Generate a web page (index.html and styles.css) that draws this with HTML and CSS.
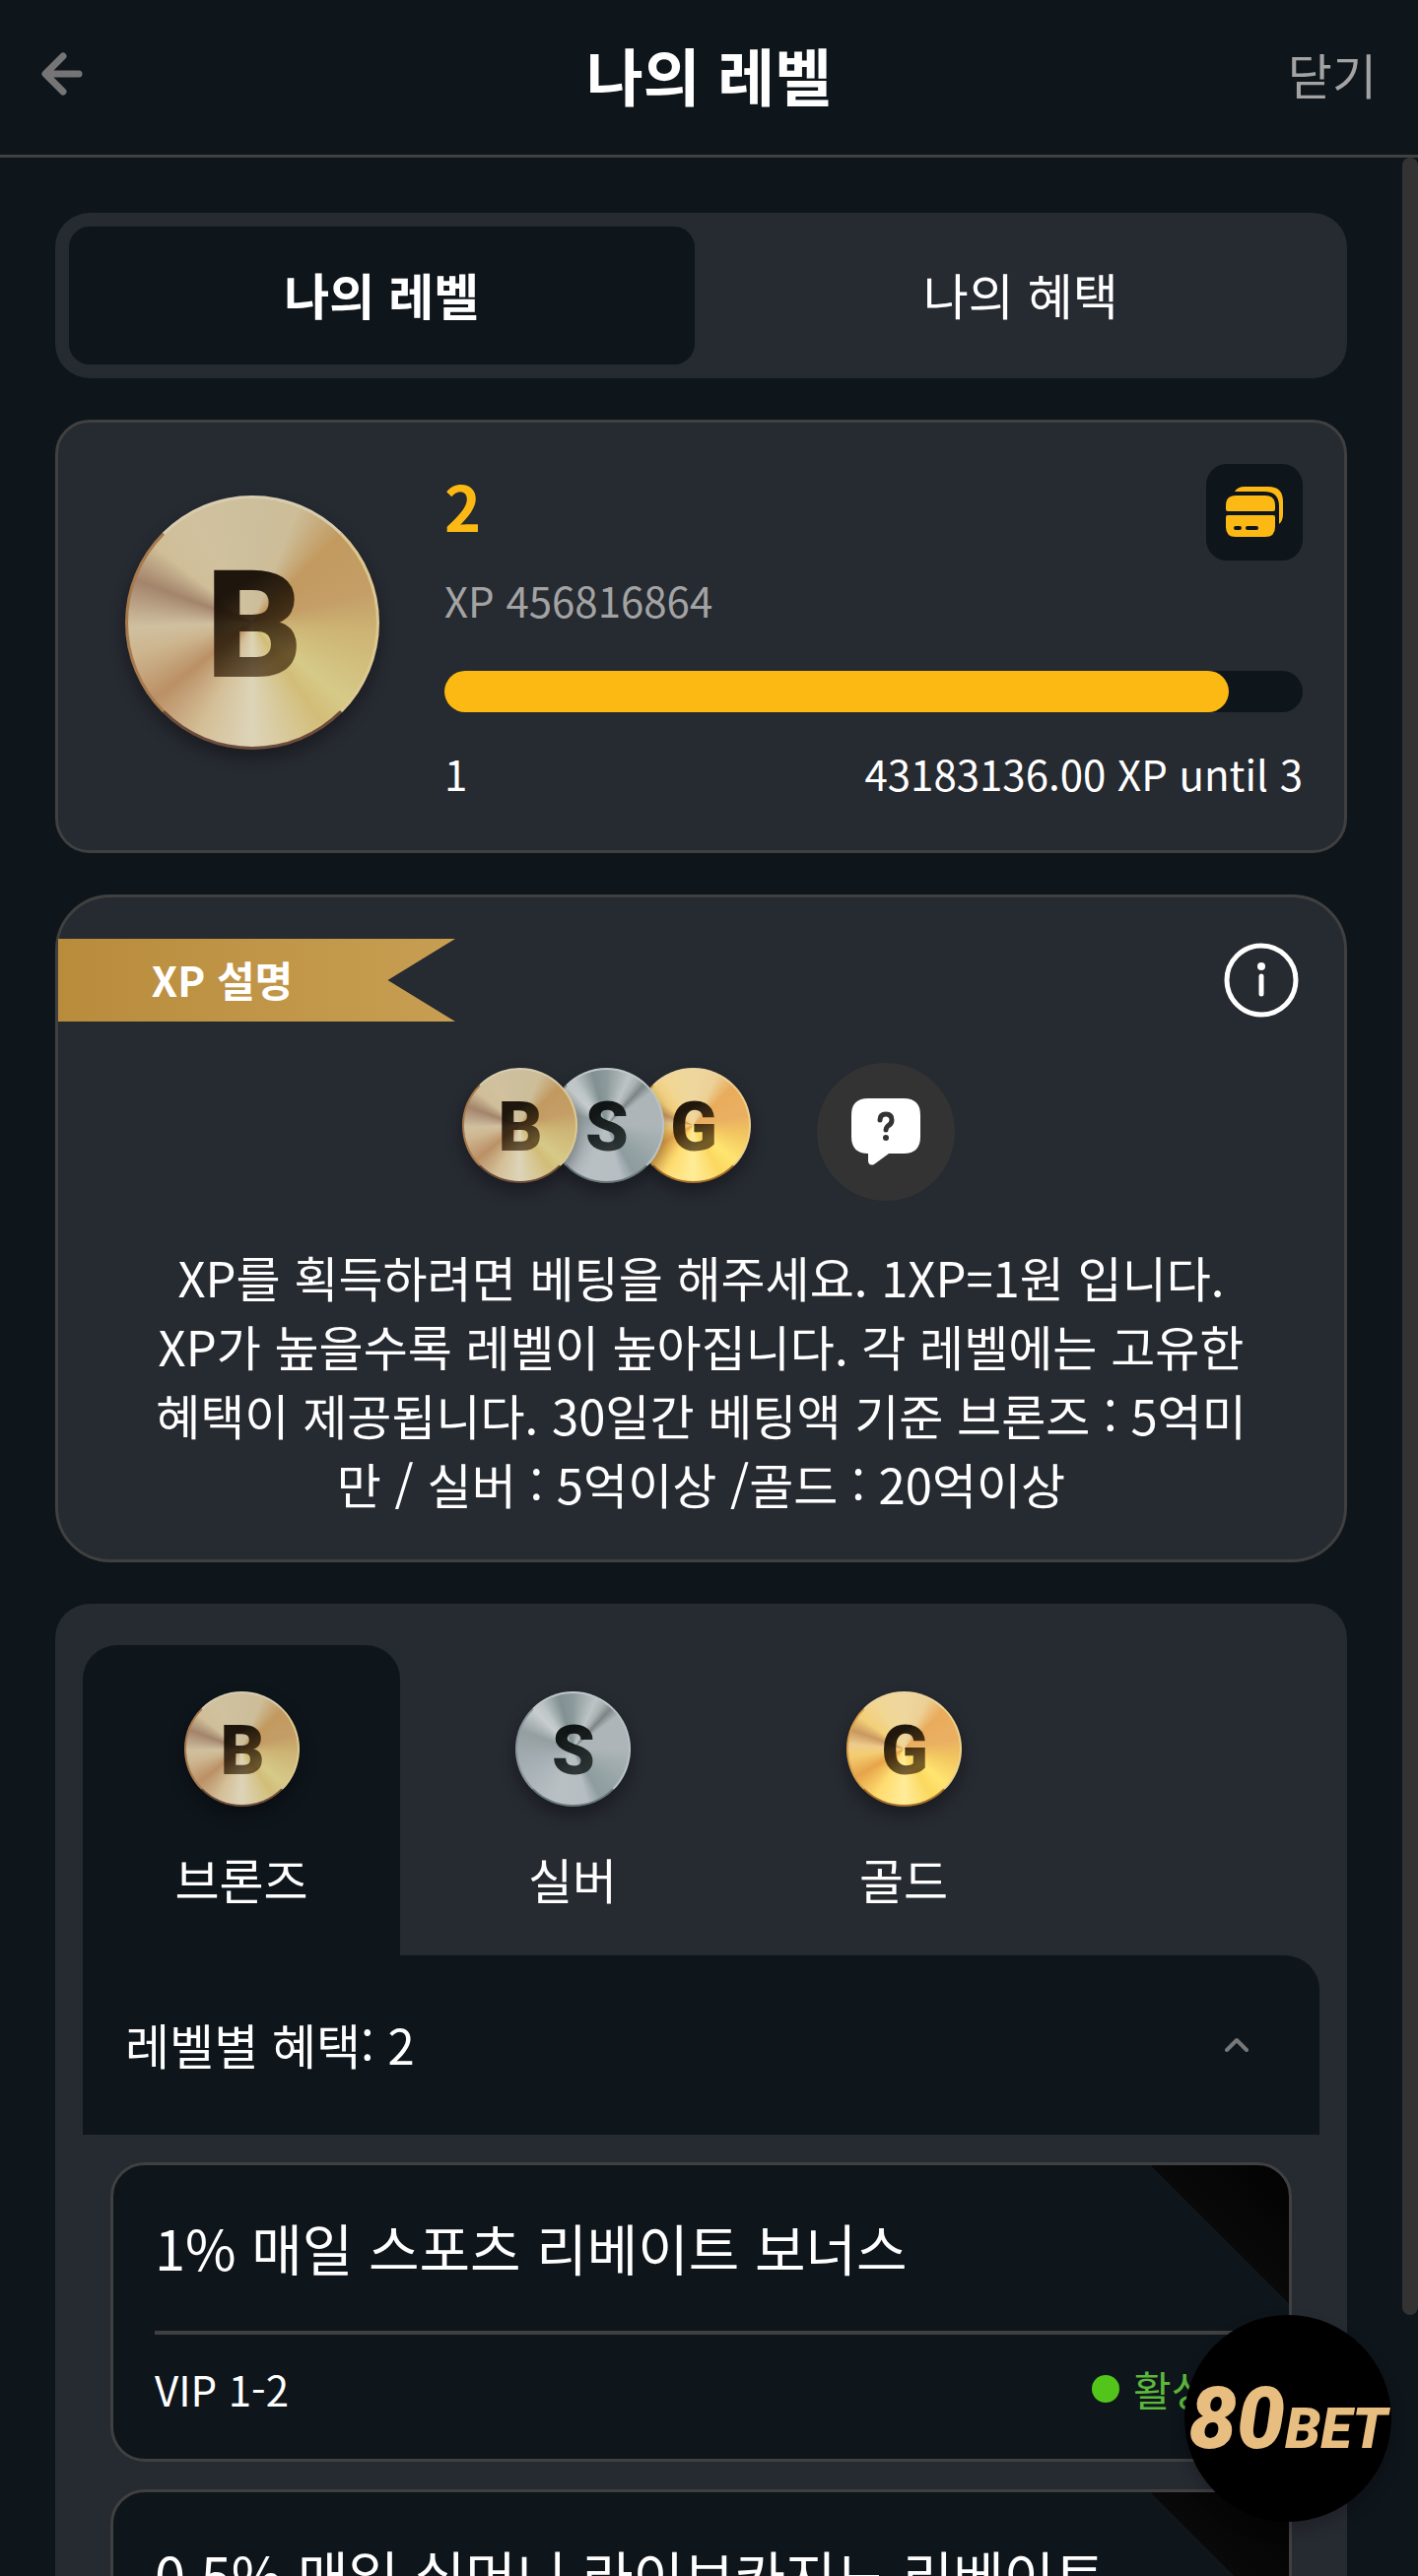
FILE: index.html
```html
<!DOCTYPE html>
<html lang="ko">
<head>
<meta charset="utf-8">
<meta name="viewport" content="width=device-width, initial-scale=1">
<title>나의 레벨</title>
<link rel="stylesheet" href="styles.css">
</head>
<body>
<div class="app">
  <header class="topbar">
    <button class="topbar-back" type="button" aria-label="뒤로">
      <svg width="42" height="44" viewBox="0 0 42 44" fill="none" stroke="currentColor" stroke-width="7" stroke-linecap="round" stroke-linejoin="round"><path d="M22 4 4 22l18 18M5 22h33"/></svg>
    </button>
    <h1 class="topbar-title">나의 레벨</h1>
    <button class="topbar-close" type="button">닫기</button>
  </header>

  <div class="body">
    <main class="content">
      <nav class="switch">
        <button class="switch-tab switch-tab-active" type="button">나의 레벨</button>
        <button class="switch-tab" type="button">나의 혜택</button>
      </nav>

      <section class="level-card">
        <div class="coin coin-large coin-bronze"><span class="coin-letter">B</span></div>
        <div class="level-info">
          <div class="level-head">
            <div>
              <div class="level-number">2</div>
              <div class="level-xp">XP 456816864</div>
            </div>
            <button class="card-button" type="button" aria-label="카드">
              <svg width="60" height="54" viewBox="0 0 60 54">
                <path fill="currentColor" d="M10 6Q13 1 20 1h24q15 0 15 15v13q0 7-4 10V21Q55 6 40 6H10z"/>
                <path fill="currentColor" d="M11 10h30q10 0 10 10v4q0 2-2 2H3q-2 0-2-2v-4q0-10 10-10z"/>
                <path fill="currentColor" fill-rule="evenodd" d="M3 30h46q2 0 2 2v10q0 10-10 10H11Q1 52 1 42V32q0-2 2-2zm8 11a2 2 0 0 0 0 4h4a2 2 0 0 0 0-4zm12 0a2 2 0 0 0 0 4h9a2 2 0 0 0 0-4z"/>
              </svg>
            </button>
          </div>
          <div class="progress"><div class="progress-fill" style="width:91.36%"></div></div>
          <div class="level-foot"><span>1</span><span>43183136.00 XP until 3</span></div>
        </div>
      </section>

      <section class="xp-card">
        <div class="xp-head">
          <h2 class="ribbon">XP 설명</h2>
          <button class="info-button" type="button" aria-label="정보">
            <svg width="76" height="76" viewBox="0 0 76 76" fill="none" stroke="currentColor" stroke-linecap="round"><circle cx="38" cy="38" r="35" stroke-width="5"/><path stroke-width="5" d="M38 34v18"/><circle cx="38" cy="24" r="4" fill="currentColor" stroke="none"/></svg>
          </button>
        </div>
        <div class="xp-icons">
          <div class="coin-stack">
            <div class="coin coin-bronze"><span class="coin-letter">B</span></div>
            <div class="coin coin-silver"><span class="coin-letter">S</span></div>
            <div class="coin coin-gold"><span class="coin-letter">G</span></div>
          </div>
          <button class="help-button" type="button" aria-label="도움말">
            <svg width="70" height="68" viewBox="0 0 70 68">
              <path fill="#fff" d="M17 0h36q17 0 17 17v22q0 17-17 17H38L23 67q-5 2-6-3v-8Q0 56 0 39V17Q0 0 17 0z"/>
              <path fill="none" stroke="#333" stroke-width="5" stroke-linecap="round" d="M29 22q0-6 6-6t6 6q0 4-4 6-2 2-2 4"/>
              <circle cx="35" cy="40" r="3" fill="#333"/>
            </svg>
          </button>
        </div>
        <p class="xp-text">XP를 획득하려면 베팅을 해주세요. 1XP=1원 입니다. XP가 높을수록 레벨이 높아집니다. 각 레벨에는 고유한 혜택이 제공됩니다. 30일간 베팅액 기준 브론즈 : 5억미만 / 실버 : 5억이상 /골드 : 20억이상</p>
      </section>

      <section class="tiers">
        <nav class="tier-tabs">
          <button class="tier-tab tier-tab-active" type="button"><span class="coin coin-bronze"><span class="coin-letter">B</span></span><span class="tier-name">브론즈</span></button>
          <button class="tier-tab" type="button"><span class="coin coin-silver"><span class="coin-letter">S</span></span><span class="tier-name">실버</span></button>
          <button class="tier-tab" type="button"><span class="coin coin-gold"><span class="coin-letter">G</span></span><span class="tier-name">골드</span></button>
        </nav>
        <button class="tier-header" type="button">
          <span class="tier-summary">레벨별 혜택: 2</span>
          <svg width="24" height="16" viewBox="0 0 24 16" fill="none" stroke="#777" stroke-width="4" stroke-linecap="round" stroke-linejoin="round"><path d="m2 13 10-10 10 10"/></svg>
        </button>
        <div class="benefits">
          <article class="benefit">
            <h3 class="benefit-title">1% 매일 스포츠 리베이트 보너스</h3>
            <div class="benefit-foot"><span>VIP 1-2</span><span class="status">활성화</span></div>
          </article>
          <article class="benefit">
            <h3 class="benefit-title">0.5% 매일 실머니 라이브카지노 리베이트</h3>
            <div class="benefit-foot"><span>VIP 1-2</span><span class="status">활성화</span></div>
          </article>
        </div>
      </section>
    </main>
    <div class="scrollbar"><div class="scrollbar-thumb"></div></div>
  </div>

  <a class="brand" href="#"><span class="brand-number">80</span><span class="brand-word">BET</span></a>
</div>
</body>
</html>
```
FILE: styles.css
```css
:root {
  --bg: #0e151b;
  --card: #262a31;
  --line: #404040;
  --gold: #fdb913;
}

* { box-sizing: border-box; }

body {
  margin: 0;
  background: var(--bg);
  color: #fff;
  font-family: "Noto Sans CJK KR", sans-serif;
  font-size: 49px;
  line-height: 70px;
}

button {
  margin: 0;
  padding: 0;
  border: 0;
  background: none;
  color: inherit;
  font: inherit;
  cursor: pointer;
}

svg { display: block; }

h1, h2, h3, p { margin: 0; font-weight: 400; }

.app {
  display: flex;
  flex-direction: column;
  height: 100vh;
  overflow: hidden;
}

/* Top bar */
.topbar {
  flex: none;
  display: grid;
  grid-template-columns: 1fr auto 1fr;
  align-items: center;
  height: 160px;
  padding: 0 42px 8px;
  border-bottom: 3px solid var(--line);
}
.topbar-back { justify-self: start; color: #757575; }
.topbar-title { font-size: 63px; font-weight: 700; }
.topbar-close { justify-self: end; color: #a3a3a3; }

.body { flex: 1; display: flex; min-height: 0; }

.content {
  flex: 1;
  display: flex;
  flex-direction: column;
  gap: 42px;
  min-width: 0;
  padding: 56px;
  overflow-y: auto;
  scrollbar-width: none;
}
.content > * { flex: none; }

.scrollbar { flex: none; width: 16px; }
.scrollbar-thumb { height: 2190px; max-height: 100%; border-radius: 8px; background: #333; }

/* View switch */
.switch {
  display: grid;
  grid-template-columns: 1fr 1fr;
  gap: 14px;
  padding: 14px;
  border-radius: 35px;
  background: var(--card);
}
.switch-tab { height: 140px; padding-bottom: 4px; border-radius: 21px; font-size: 50px; }
.switch-tab-active { background: var(--bg); font-weight: 700; }

/* Coins */
.coin {
  flex: none;
  display: flex;
  align-items: center;
  justify-content: center;
  width: 117px;
  height: 117px;
  border: 2px solid;
  border-radius: 50%;
  box-shadow: 0 8px 16px rgba(0, 0, 0, .35);
  background-origin: border-box;
}
.coin-letter {
  padding: 2px 0 0 2px;
  font: 900 70px/1 Roboto, sans-serif;
  background: linear-gradient(150deg, rgba(20, 12, 4, .95) 30%, rgba(60, 36, 8, .7) 75%);
  -webkit-background-clip: text;
  background-clip: text;
  color: transparent;
}
.coin-large { width: 258px; height: 258px; border-width: 3px; }
.coin-large .coin-letter { padding: 6px 0 0 4px; font-size: 152px; }
.coin-silver .coin-letter {
  background-image: linear-gradient(150deg, rgba(8, 12, 12, .95) 30%, rgba(24, 30, 30, .85) 75%);
}
.coin-bronze {
  border-color: #d8cdb0 #dcc890 #6e4c3c #a87a4c;
  background-image: conic-gradient(#cdbf9c 0deg, #cdbd98 22deg, #c29a60 45deg, #c49e66 75deg, #cdb474 95deg, #d6ca88 130deg, #d2bd78 145deg, #ddd4b8 180deg, #d4c098 205deg, #bb9066 232deg, #cdb58e 255deg, #d0c0a0 268deg, #a3846c 290deg, #cfbe98 308deg, #d1c19e 330deg, #cdbf9c 360deg);
}
.coin-silver {
  border-color: #c0c8ca #b8c2c6 #68777c #8a9599;
  background-image: conic-gradient(#8c9a9c 0deg, #bec4c5 25deg, #aab1b2 34deg, #7c8687 43deg, #adb5b8 53deg, #adb5b8 90deg, #93a1a3 135deg, #8e9c9f 150deg, #b6bec2 165deg, #b8c0c4 200deg, #a2acb0 260deg, #949fa1 290deg, #c8cecf 315deg, #bcc4c5 325deg, #819092 345deg, #8c9a9c 360deg);
}
.coin-gold {
  border-color: #eed6a0 #eed08a #a8702c #dca048;
  background-image: conic-gradient(#eed79e 0deg, #ecd096 25deg, #e9ac5c 45deg, #eab062 80deg, #f2c560 100deg, #ffe570 130deg, #fbd860 150deg, #ffec98 180deg, #ffdc70 210deg, #e6a44a 240deg, #f4cc70 262deg, #eecb8c 275deg, #c99860 290deg, #f2cf78 306deg, #f1d694 330deg, #eed79e 360deg);
}

/* Level summary */
.level-card {
  display: flex;
  align-items: flex-start;
  gap: 66px;
  padding: 42px 42px 42px 68px;
  border: 3px solid var(--line);
  border-radius: 35px;
  background: var(--card);
}
.level-card > .coin { margin-top: 32px; }
.level-info { flex: 1; font-size: 42px; line-height: 60px; }
.level-head { display: flex; justify-content: space-between; align-items: flex-start; }
.level-number { color: var(--gold); font-size: 63px; line-height: 84px; font-weight: 700; }
.level-xp { padding-top: 24px; color: #a3a3a3; }
.card-button {
  display: grid;
  place-items: center;
  width: 98px;
  height: 98px;
  border-radius: 21px;
  background: var(--bg);
  color: var(--gold);
}
.progress { height: 42px; margin: 42px 0 32px; border-radius: 21px; background: var(--bg); }
.progress-fill { height: 100%; border-radius: 21px; background: var(--gold); }
.level-foot { display: flex; justify-content: space-between; padding-bottom: 6px; }

/* XP explanation */
.xp-card {
  padding: 42px 0 42px;
  border: 3px solid var(--line);
  border-radius: 56px;
  background: var(--card);
}
.xp-head { display: flex; justify-content: space-between; align-items: center; padding-right: 46px; }
.ribbon {
  width: 403px;
  padding: 0 70px 2px 0;
  background: linear-gradient(90deg, #b98c3c, #c79e52);
  clip-path: polygon(0 0, 100% 0, 83% 50%, 100% 100%, 0 100%);
  font-size: 42px;
  line-height: 82px;
  font-weight: 700;
  text-align: center;
}
.xp-icons { display: flex; justify-content: center; gap: 67px; padding: 42px 0 0 14px; }
.coin-stack { display: flex; padding-top: 5px; }
.coin-stack .coin + .coin { margin-left: -29px; }
.coin-stack .coin { position: relative; }
.coin-stack .coin:nth-child(1) { z-index: 3; }
.coin-stack .coin:nth-child(2) { z-index: 2; }
.help-button {
  display: grid;
  place-items: center;
  width: 140px;
  height: 140px;
  border-radius: 50%;
  background: #333;
}
.xp-text { padding: 42px 92px 0; text-align: center; }

/* Tiers */
.tiers { padding: 42px 28px; border-radius: 35px; background: var(--card); }
.tier-tabs { display: flex; gap: 14px; }
.tier-tab {
  display: flex;
  flex-direction: column;
  align-items: center;
  gap: 38px;
  width: 322px;
  height: 315px;
  padding-top: 47px;
  border-radius: 35px 35px 0 0;
}
.tier-tab-active { background: var(--bg); }
.tier-header {
  display: flex;
  align-items: center;
  justify-content: space-between;
  width: 100%;
  height: 182px;
  padding: 0 72px 0 43px;
  border-radius: 0 35px 0 0;
  background: var(--bg);
}
.tier-summary { padding-bottom: 2px; }
.benefits { display: flex; flex-direction: column; gap: 28px; padding: 28px 28px 0; }
.benefit {
  position: relative;
  padding: 0 42px;
  border: 3px solid var(--line);
  border-radius: 35px;
  background: linear-gradient(225deg, #020202, #090909 99px, transparent 99px) var(--bg);
}
.benefit-title { padding: 41px 0 43px; border-bottom: 4px solid var(--line); font-size: 56px; line-height: 84px; }
.benefit-foot { display: flex; justify-content: space-between; padding: 25px 0 41px; font-size: 42px; line-height: 60px; }
.status { display: flex; align-items: center; gap: 14px; color: #5cb83c; }
.status::before { content: ""; width: 28px; height: 28px; border-radius: 50%; background: #53c41a; }

/* Floating brand button */
.brand {
  position: fixed;
  right: 27px;
  bottom: 55px;
  display: flex;
  align-items: baseline;
  justify-content: center;
  width: 210px;
  height: 210px;
  border-radius: 50%;
  background: #000;
  box-shadow: 0 8px 16px rgba(0, 0, 0, .2);
  color: #e8bd80;
  font: italic 900 87px/210px Roboto, sans-serif;
  text-decoration: none;
}
.brand-word { font-size: 58px; }
```
